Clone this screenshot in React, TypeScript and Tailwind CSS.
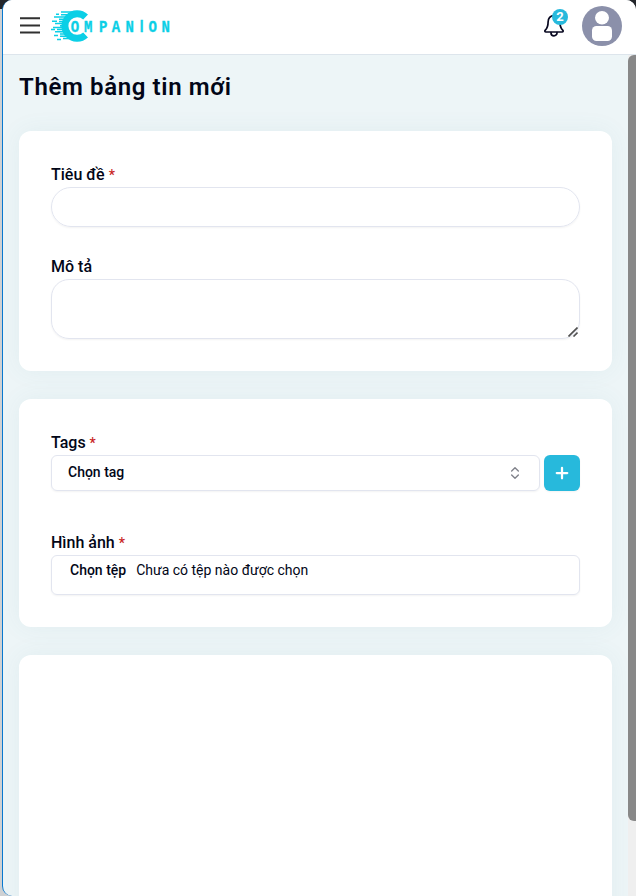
import React from "react";
import { ChevronsUpDown, Plus } from "lucide-react";

function Logo() {
  return (
    <svg width="122" height="36" viewBox="0 0 122 36" className="block">
      <g stroke="#0bcfe6" fill="none">
        <path d="M34.6 9 A12.3 12.3 0 1 0 34.6 27" strokeWidth="7" />
        <path
          d="M10 4h12 M5 6.2h3 M10 6.8h9 M3 9h14 M8 11.2h8 M1 13.2h5 M8 13.4h7 M4 15.6h10 M9 17.8h5 M2 19.4h11 M0 21.4h4 M6 21.6h8 M4 23.8h11 M9 26h7 M3 27.6h4 M9 28.2h9 M6 31.4h4 M12 30.4h9"
          strokeWidth="1.5"
        />
      </g>
      <text
        x="24 37.2 52.2 65 78.8 90.6 101.8 114.8"
        y="20"
        transform="scale(1 1.2)"
        textAnchor="middle"
        fill="#0bcfe6"
        stroke="#0bcfe6"
        strokeWidth="0.3"
        fontFamily="Liberation Mono, monospace"
        fontWeight="700"
        fontSize="14"
      >
        OMPAN<tspan fontFamily="Roboto, sans-serif" fontSize="13">I</tspan>ON
      </text>
    </svg>
  );
}

function Label({ children, required }: { children: React.ReactNode; required?: boolean }) {
  return (
    <div className="h-6 text-base leading-6 font-medium whitespace-pre">
      {children}
      {required && <span className="ml-[0.5px] text-sm font-medium text-[#c91f1f]"> *</span>}
    </div>
  );
}

function Card({ className, children }: { className: string; children?: React.ReactNode }) {
  return (
    <section className={"shrink-0 rounded-xl bg-white px-8 shadow-[0_0_24px_rgba(75,140,155,0.07)] " + className}>
      {children}
    </section>
  );
}

export default function App() {
  return (
    <div className="h-[896px] w-[636px] overflow-hidden bg-[linear-gradient(#24262b_0px,#24262b_9px,#cfd1d3_9px)] pl-[2px] font-[Roboto,sans-serif] text-[#020617]">
      <div className="flex h-full flex-col overflow-hidden rounded-l-[10px] rounded-tr-[10px] border-l border-[#0878cf] bg-[#edf5f7]">
        <header className="flex h-[55px] shrink-0 items-start border-b border-[#dde5ec] bg-white pl-[17px]">
          <svg width="20" height="20" viewBox="0 0 20 20" className="mt-4 shrink-0" stroke="#303030" strokeWidth="2">
            <path d="M0 2.2h20M0 9.4h20M0 16.5h20" />
          </svg>
          <div className="mt-2 ml-[11px]">
            <Logo />
          </div>
          <div className="relative mt-[14px] ml-auto">
            <svg width="22" height="24" viewBox="0 0 22 24" fill="none" stroke="#080820" strokeWidth="1.7" strokeLinecap="round" strokeLinejoin="round">
              <path d="M11 1.5C7.3 1.5 5.1 4.4 5.1 8c0 4.6-.8 6.2-2.8 8.2-.9.9-.4 1.8.6 1.8h16.2c1 0 1.5-.9.6-1.8-2-2-2.8-3.6-2.8-8.2 0-3.6-2.2-6.5-5.9-6.5Z" />
              <path d="M8 18.5v.4a3 2.9 0 0 0 6 0v-.4" />
            </svg>
            <span className="absolute top-[-5px] left-[9px] flex size-4 items-center justify-center rounded-full bg-[#27b9dc] text-[13px] leading-4 font-bold text-white">
              2
            </span>
          </div>
          <svg width="40" height="40" viewBox="0 0 40 40" className="mt-[6px] mr-[14px] ml-[17px] shrink-0">
            <circle cx="20" cy="20" r="20" fill="#8b90aa" />
            <ellipse cx="20" cy="11.7" rx="7" ry="6.8" fill="white" />
            <rect x="10" y="20" width="20" height="15" rx="4.5" fill="white" />
          </svg>
        </header>
        <div className="flex min-h-0 flex-1">
          <main className="flex w-[625px] shrink-0 flex-col gap-7 overflow-hidden pr-4 pl-4">
            <h1 className="mt-4 h-8 text-2xl leading-8 font-semibold tracking-[0.63px]">Thêm bảng tin mới</h1>
            <Card className="h-60 pt-8">
              <Label required>Tiêu đề</Label>
              <div className="h-10 rounded-[20px] border border-[#e2e5ef] shadow-xs" />
              <div className="mt-7">
                <Label>Mô tả</Label>
              </div>
              <div className="flex h-[60px] items-end justify-end rounded-[18px] border border-[#e2e5ef] pr-px pb-px shadow-xs">
                <svg width="10" height="10" viewBox="0 0 10 10" stroke="#505050" strokeWidth="1.6">
                  <path d="M.5 9.5 9.5 .5M5.5 9.5l4-4" />
                </svg>
              </div>
            </Card>
            <Card className="h-[228px] pt-8">
              <Label required>Tags</Label>
              <div className="flex gap-1">
                <div className="flex h-9 flex-1 items-center justify-between rounded-md border border-[#e2e5ef] px-4 text-sm font-medium shadow-xs">
                  <span className="-mt-0.5">Chọn tag</span>
                  <ChevronsUpDown className="size-4 opacity-50" />
                </div>
                <button className="flex size-9 items-center justify-center rounded-md bg-[#27b9dc] text-white shadow-xs">
                  <Plus size={18} strokeWidth={3} />
                </button>
              </div>
              <div className="mt-10">
                <Label required>Hình ảnh</Label>
              </div>
              <div className="flex h-10 gap-2.5 rounded-md border border-[#e2e5ef] px-[18px] pt-1 text-sm leading-5 shadow-xs">
                <span className="font-medium">Chọn tệp</span>
                <span>Chưa có tệp nào được chọn</span>
              </div>
            </Card>
            <Card className="h-[300px]" />
          </main>
          <div className="flex-1 bg-[#efefef]">
            <div className="h-[766px] w-[13px] rounded-md bg-[#888888]" />
          </div>
        </div>
      </div>
    </div>
  );
}
